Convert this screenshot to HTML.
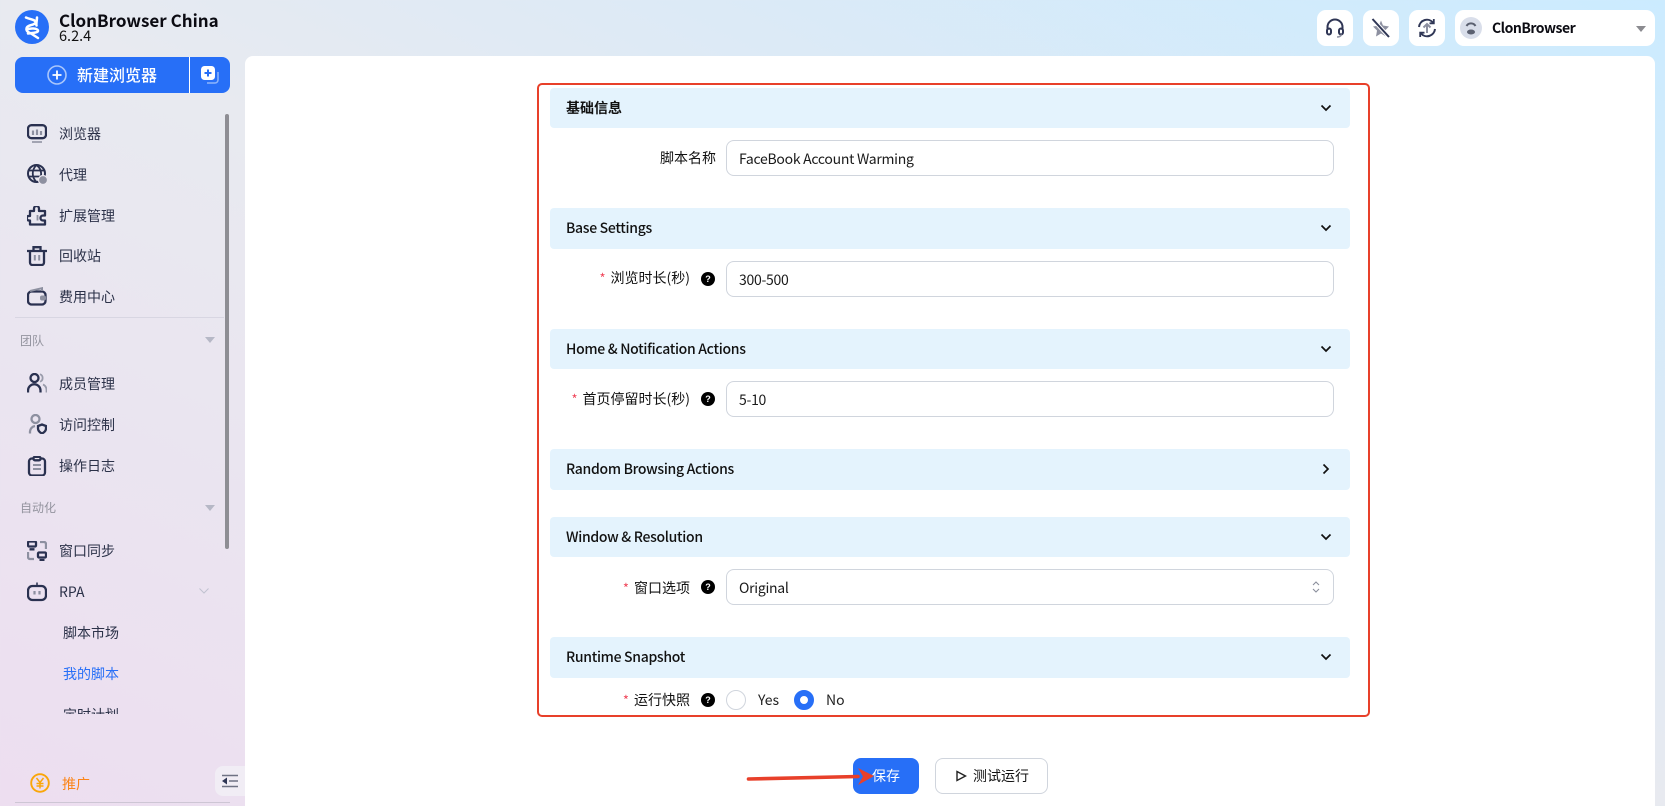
<!DOCTYPE html>
<html lang="zh"><head><meta charset="utf-8"><title>ClonBrowser China</title>
<style>
*{box-sizing:border-box}
html,body{margin:0;padding:0;width:1665px;height:806px;overflow:hidden}
body{position:relative;font-family:"Liberation Sans","Noto Sans CJK SC",sans-serif;background:linear-gradient(to top right,#eddef0 0%,#e8eaf0 50%,#cbebff 100%);color:#000}
.a{position:absolute;white-space:nowrap}
.cjk{font-family:"Noto Sans CJK SC",sans-serif}
.m{position:absolute;left:59px;font:14px/20px "Noto Sans CJK SC",sans-serif;color:#2c3249;white-space:nowrap}
.g{position:absolute;left:20px;font:12px/18px "Noto Sans CJK SC",sans-serif;color:#94949f}
.tri{position:absolute;width:0;height:0;border-left:5.5px solid transparent;border-right:5.5px solid transparent;border-top:6px solid #b6b8c6}
.i{position:absolute;left:27px;width:20px;height:20px;fill:none;stroke:#2a3150;stroke-width:2.3}
.tb{position:absolute;top:10px;width:36px;height:36px;background:#fff;border-radius:9px}
.tb svg{position:absolute;left:8px;top:8px;width:20px;height:20px;fill:none;stroke:#2f3655;stroke-width:2}
.sec{position:absolute;left:550px;width:800px;background:#e4f3fd;border-radius:4px;height:40px}
.sec span{position:absolute;left:16px;top:10px;font:500 14px/20px "Noto Sans CJK SC",sans-serif;color:#111;letter-spacing:-.3px}
.sec svg{position:absolute;left:770px;top:14px;width:12px;height:12px;fill:none;stroke:#111;stroke-width:1.7}
.inp{position:absolute;left:726px;width:608px;height:36px;border:1px solid #d0d5dd;border-radius:8px;background:#fff;font:14px/36px "Noto Sans CJK SC",sans-serif;padding-left:12px;color:#1a1a1a;letter-spacing:-.28px}
.lb{position:absolute;font:14px/20px "Noto Sans CJK SC",sans-serif;color:#111;white-space:nowrap}
.st{color:#f0465a;margin-right:5px;font-size:13px}
.h{position:absolute;left:701px;width:14px;height:14px;border-radius:50%;background:#000;color:#fff;font:700 9px/14px "Liberation Sans",sans-serif;text-align:center}
</style></head><body>

<svg class="a" style="left:15px;top:10px" width="34" height="34" viewBox="0 0 34 34"><circle cx="17" cy="17" r="17" fill="#276ff7"/><path d="M11 7.500C15 9.500 21 9.500 20.500 12.500 20 15.500 12 14.500 11.500 18.500 11 21.500 14 22.500 16 23.500L23 28M22 7.500C22 10 21 14 21.500 15.500M12 19.500C15 18 22 18 23 20.500 23.500 23 16 23 13 23.500" fill="none" stroke="#fff" stroke-width="2.500" stroke-linecap="round"/></svg>
<div class="a cjk" style="left:59px;top:8px;font-size:17px;line-height:24px;font-weight:700;color:#0b0b12">ClonBrowser China</div>
<div class="a cjk" style="left:59px;top:27px;font-size:14.500px;line-height:18px;color:#111">6.2.4</div>

<div class="a" style="left:15px;top:57px;width:215px;height:36px;background:#276ff7;border-radius:8px"></div>
<div class="a" style="left:189px;top:57px;width:1px;height:36px;background:#fff"></div>
<svg class="a" style="left:47px;top:65px" width="20" height="20" viewBox="0 0 20 20" fill="none"><circle cx="10" cy="10" r="9" stroke="#a9c6fb" stroke-width="1.600"/><path d="M10 5.500v9M5.500 10h9" stroke="#fff" stroke-width="1.800"/></svg>
<div class="a cjk" style="left:77px;top:62px;font-size:16px;line-height:24px;font-weight:500;color:#fff">新建浏览器</div>
<svg class="a" style="left:200px;top:65px" width="20" height="20" viewBox="0 0 20 20" fill="none"><path d="M18 7v8a3 3 0 0 1-3 3H7" stroke="#8fb5fb" stroke-width="1.500"/><rect x="1" y="1" width="14" height="14" rx="3.500" fill="#fff"/><path d="M8 4.500v7M4.500 8h7" stroke="#276ff7" stroke-width="2"/></svg>

<div class="a" style="left:225px;top:114px;width:4px;height:435px;background:#8e8e94;border-radius:2px"></div>

<svg class="i" style="top:124px" viewBox="0 0 20 20"><rect x="1" y="1.200" width="18" height="13" rx="3.500"/><path d="M6 6.500v4.500M10 5.500V11M14 7v4" stroke="#8d90a0" stroke-width="2.200"/><path d="M5 18h10" stroke="#9a9cab" stroke-width="1.800"/></svg>
<div class="m" style="top:124px">浏览器</div>
<svg class="i" style="top:164px" viewBox="0 0 20 20"><circle cx="9.500" cy="9.500" r="8.500" stroke-width="2"/><path d="M1 6.500h17M1 12.500h12M9.500 1c-5 5-5 12 0 17M9.500 1c4 3 5 7 4.500 11" stroke-width="1.800"/><circle cx="16" cy="16" r="4.500" fill="#8d90a0" stroke="#ece8f0" stroke-width="1.200"/></svg>
<div class="m" style="top:165px">代理</div>
<svg class="i" style="top:206px" viewBox="0 0 20 20"><path d="M7 2.500a2.500 2.500 0 0 1 5 0V5h6v4.500h-2a2.500 2.500 0 0 0 0 5h2V18.500H3V14.500H1.500a2.500 2.500 0 0 1-.5-4.500H3V5h4z" stroke-linejoin="round"/><path d="M10.500 9v5.500" stroke="#8d90a0" stroke-width="1.800"/></svg>
<div class="m" style="top:206px">扩展管理</div>
<svg class="i" style="top:246px" viewBox="0 0 20 20"><path d="M0 5h20M6.500 4.500V1.200h7V4.500M3 5v11.500a2.500 2.500 0 0 0 2.500 2.500h9a2.500 2.500 0 0 0 2.500-2.500V5"/><path d="M7.800 9v5.500M12.200 9v5.500" stroke="#8d90a0" stroke-width="2"/></svg>
<div class="m" style="top:246px">回收站</div>
<svg class="i" style="top:287px" viewBox="0 0 20 20"><rect x="1" y="4.500" width="17.500" height="13" rx="3.500"/><path d="M3 4l12-2.800V4" stroke="#8d90a0" stroke-width="2"/><rect x="13" y="8.500" width="6" height="5" rx="2" fill="#8d90a0" stroke="none"/></svg>
<div class="m" style="top:287px">费用中心</div>

<div class="a" style="left:15px;top:317px;width:209px;height:1px;background:#d8d6e2"></div>
<div class="g" style="top:332px">团队</div><div class="tri" style="left:205px;top:337px"></div>

<svg class="i" style="top:373px" viewBox="0 0 20 20"><circle cx="7.500" cy="5" r="4"/><path d="M1 19.500v-2a6 6 0 0 1 12.500 0v2"/><path d="M13 1.200a4 4 0 0 1 0 7.500M16 11.500a6 6 0 0 1 3.500 5.500v2.500" stroke="#9a9cab" stroke-width="1.800"/></svg>
<div class="m" style="top:374px">成员管理</div>
<svg class="i" style="top:414px" viewBox="0 0 20 20"><circle cx="8.500" cy="5" r="4" stroke="#8d90a0"/><path d="M3 19.500v-2a6 6 0 0 1 5-5.500" stroke="#8d90a0"/><path d="M11 12l4-1.500 4 1.500v2.500c0 2.500-2 4-4 5-2-1-4-2.500-4-5z" fill="#e8e4ee"/></svg>
<div class="m" style="top:415px">访问控制</div>
<svg class="i" style="top:456px" viewBox="0 0 20 20"><rect x="2" y="2.500" width="16" height="17" rx="3"/><rect x="6.500" y="0.800" width="7" height="3.500" rx="1.500" fill="#ece8f0"/><path d="M6 9h8M6 13h8" stroke="#8d90a0" stroke-width="2"/></svg>
<div class="m" style="top:456px">操作日志</div>

<div class="g" style="top:499px">自动化</div><div class="tri" style="left:205px;top:505px"></div>

<svg class="i" style="top:541px" viewBox="0 0 20 20"><rect x="1" y="0.500" width="8" height="5" rx="1"/><rect x="11" y="11.500" width="8" height="5" rx="1"/><path d="M13 1h4a2 2 0 0 1 2 2V8M1 11v5a2 2 0 0 0 2 2h4" stroke="#8d90a0"/><path d="M2.500 8.300h5M12.500 19h5" stroke="#2a3150"/></svg>
<div class="m" style="top:541px">窗口同步</div>
<svg class="i" style="top:582px" viewBox="0 0 20 20"><rect x="1" y="4" width="18" height="14" rx="4.500"/><path d="M10 0.500V4" stroke-width="1.500"/><path d="M7.500 9v3.500M12.500 9v3.500" stroke="#8d90a0" stroke-width="2.200"/></svg>
<div class="m" style="top:582px;font-size:14px">RPA</div>
<svg class="a" style="left:199px;top:587px" width="10" height="8" viewBox="0 0 10 8" fill="none"><path d="M.5 1.500 5 6 9.500 1.500" stroke="#c0c2d0" stroke-width="1"/></svg>
<div class="m" style="top:623px;left:63px">脚本市场</div>
<div class="m" style="top:664px;left:63px;color:#276ff7">我的脚本</div>
<div class="a" style="left:0;top:700px;width:225px;height:14px;overflow:hidden"><div class="m" style="top:5px;left:63px">定时计划</div></div>

<svg class="a" style="left:30px;top:773px" width="20" height="20" viewBox="0 0 20 20" fill="none"><circle cx="10" cy="10" r="8.800" stroke="#f9a60a" stroke-width="1.900"/><path d="M6.500 5 10 9.500 13.500 5M10 9.500V15.500M6.500 10.500h7M6.500 13h7" stroke="#f9a60a" stroke-width="1.500"/></svg>
<div class="a cjk" style="left:62px;top:774px;font-size:14px;line-height:20px;color:#fb8518">推广</div>
<div class="a" style="left:215px;top:766px;width:30px;height:30px;background:#f1edf5;border-radius:8px 0 0 8px"></div>
<svg class="a" style="left:222px;top:774px" width="16" height="14" viewBox="0 0 16 14" fill="none"><path d="M0 1.500h16M7 7h9M0 12.500h16" stroke="#6f7284" stroke-width="1.600"/><path d="M5 3.500v7L0 7z" fill="#2f3655"/></svg>
<div class="a" style="left:15px;top:802px;width:215px;height:1px;background:#cdc6d4"></div>

<div class="tb" style="left:1317px"><svg viewBox="0 0 20 20"><path d="M2.500 12V9a7.500 7.500 0 0 1 15 0v3"/><rect x="2" y="10.500" width="4" height="6" rx="2"/><rect x="14" y="10.500" width="4" height="6" rx="2"/><path d="M12 19c2.500 0 4-1 4.500-2.500" stroke="#8d90a0" stroke-width="1.500"/></svg></div>
<div class="tb" style="left:1363px"><svg viewBox="0 0 20 20"><path d="M10 2.500l2 5 6 1-4 4 1 6-5-3-5 3 1-6-4-4 6-1z" fill="#8d90a0" stroke="none"/><path d="M1.500 1 18 19" stroke="#fff" stroke-width="4"/><path d="M1.500 1 18 19"/></svg></div>
<div class="tb" style="left:1409px"><svg viewBox="0 0 20 20"><path d="M2 9a8 8 0 0 1 14-4.500M18 11a8 8 0 0 1-14 4.500"/><path d="M16.800 1v4.300h-4.300M3.200 19v-4.300h4.300" stroke-width="1.800"/><path d="M10 15V6M6.500 9.500 10 6l3.500 3.500" stroke="#8d90a0" stroke-width="2"/></svg></div>
<div class="a" style="left:1455px;top:10px;width:200px;height:36px;background:#fff;border-radius:9px"></div>
<svg class="a" style="left:1460px;top:17px" width="22" height="22" viewBox="0 0 22 22"><circle cx="11" cy="11" r="11" fill="#d9deea"/><path d="M6.500 9c2-3.500 7-3.500 9 0" fill="none" stroke="#5b6070" stroke-width="2"/><ellipse cx="11" cy="15" rx="4" ry="2.500" fill="#5b6070"/></svg>
<div class="a cjk" style="left:1492px;top:18px;font-size:14px;line-height:20px;font-weight:700;color:#0b0b12;letter-spacing:-.5px">ClonBrowser</div>
<div class="tri" style="left:1636px;top:26px;border-top-color:#8b8b90;border-left-width:5.500px;border-right-width:5.500px"></div>

<div class="a" style="left:245px;top:56px;width:1410px;height:760px;background:#fff;border-radius:8px"></div>

<div class="sec" style="top:88px"><span style="font-weight:700;letter-spacing:0">基础信息</span><svg viewBox="0 0 12 12"><path d="M1.500 3.500 6 8l4.500-4.500"/></svg></div>
<div class="lb" style="right:949px;top:148px">脚本名称</div>
<div class="inp" style="top:140px">FaceBook Account Warming</div>

<div class="sec" style="top:208px;height:41px"><span>Base Settings</span><svg viewBox="0 0 12 12"><path d="M1.500 3.500 6 8l4.500-4.500"/></svg></div>
<div class="lb" style="right:975px;top:268px"><span class="st">*</span>浏览时长(秒)</div><div class="h" style="top:272px">?</div>
<div class="inp" style="top:261px">300-500</div>

<div class="sec" style="top:329px"><span>Home &amp; Notification Actions</span><svg viewBox="0 0 12 12"><path d="M1.500 3.500 6 8l4.500-4.500"/></svg></div>
<div class="lb" style="right:975px;top:389px"><span class="st">*</span>首页停留时长(秒)</div><div class="h" style="top:392px">?</div>
<div class="inp" style="top:381px">5-10</div>

<div class="sec" style="top:449px;height:41px"><span>Random Browsing Actions</span><svg viewBox="0 0 12 12"><path d="M3.500 1.500 8 6l-4.500 4.500"/></svg></div>

<div class="sec" style="top:517px"><span>Window &amp; Resolution</span><svg viewBox="0 0 12 12"><path d="M1.500 3.500 6 8l4.500-4.500"/></svg></div>
<div class="lb" style="right:975px;top:578px"><span class="st">*</span>窗口选项</div><div class="h" style="top:580px">?</div>
<div class="inp" style="top:569px">Original</div>
<svg class="a" style="left:1310px;top:580px" width="12" height="14" viewBox="0 0 12 14" fill="none"><path d="M3 5l3-3 3 3M3 9l3 3 3-3" stroke="#8a8f9c" stroke-width="1.100"/></svg>

<div class="sec" style="top:637px;height:41px"><span>Runtime Snapshot</span><svg viewBox="0 0 12 12"><path d="M1.500 3.500 6 8l4.500-4.500"/></svg></div>
<div class="lb" style="right:975px;top:690px"><span class="st">*</span>运行快照</div><div class="h" style="top:693px">?</div>
<div class="a" style="left:726px;top:690px;width:20px;height:20px;border:1px solid #d0d5dd;border-radius:50%"></div>
<div class="a cjk" style="left:758px;top:690px;font-size:14px;line-height:20px;color:#222">Yes</div>
<div class="a" style="left:794px;top:690px;width:20px;height:20px;border:6px solid #276ff7;border-radius:50%;background:#fff"></div>
<div class="a cjk" style="left:826px;top:690px;font-size:14px;line-height:20px;color:#222">No</div>

<div class="a" style="left:537px;top:83px;width:833px;height:634px;border:2px solid #e8402a;border-radius:5px"></div>

<div class="a cjk" style="left:853px;top:758px;width:66px;height:36px;background:#276ff7;border-radius:8px;color:#fff;font-size:14px;line-height:36px;text-align:center">保存</div>
<div class="a cjk" style="left:935px;top:758px;width:113px;height:36px;border:1px solid #d0d5dd;border-radius:8px;background:#fff;color:#111;font-size:14px;line-height:34px;padding-left:37px">测试运行</div>
<svg class="a" style="left:955px;top:770px" width="12" height="12" viewBox="0 0 12 12" fill="none"><path d="M2 1.500 10.500 6 2 10.500z" stroke="#222" stroke-width="1.400"/></svg>

<svg class="a" style="left:740px;top:760px" width="140" height="30" viewBox="0 0 140 30" fill="none"><path d="M8.500 19 118 16.500" stroke="#e8402a" stroke-width="3.600" stroke-linecap="round"/><path d="M134 16 118 8 123 16.500 118 25z" fill="#e8402a"/></svg>

</body></html>
